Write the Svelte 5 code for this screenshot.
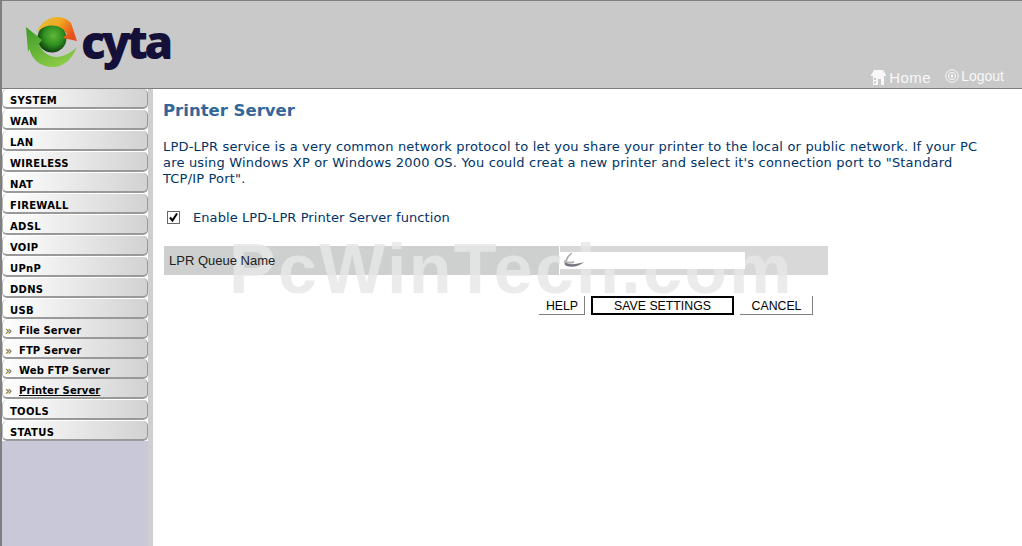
<script>
  const menu = [
    { label: "SYSTEM" },
    { label: "WAN" },
    { label: "LAN" },
    { label: "WIRELESS" },
    { label: "NAT" },
    { label: "FIREWALL" },
    { label: "ADSL" },
    { label: "VOIP" },
    { label: "UPnP" },
    { label: "DDNS" },
    { label: "USB", tight: true },
    { label: "File Server", sub: true, tight: true },
    { label: "FTP Server", sub: true, tight: true },
    { label: "Web FTP Server", sub: true, tight: true },
    { label: "Printer Server", sub: true, active: true },
    { label: "TOOLS" },
    { label: "STATUS" },
  ];
</script>

<div class="page">
  <header class="top">
    <div class="logo">
      <svg width="56" height="56" viewBox="0 0 56 56">
        <defs>
          <radialGradient id="ball" cx="0.55" cy="0.42" r="0.6">
            <stop offset="0" stop-color="#62b838" />
            <stop offset="0.55" stop-color="#2f8f20" />
            <stop offset="1" stop-color="#0c3a0e" />
          </radialGradient>
          <linearGradient id="ring" x1="0" y1="0" x2="1" y2="0.5">
            <stop offset="0" stop-color="#d8c840" />
            <stop offset="0.55" stop-color="#f5a623" />
            <stop offset="1" stop-color="#e8501a" />
          </linearGradient>
          <linearGradient id="arrow" x1="0" y1="0" x2="0.6" y2="1">
            <stop offset="0" stop-color="#3a9a28" />
            <stop offset="1" stop-color="#8ccb46" />
          </linearGradient>
        </defs>
        <circle cx="27" cy="22" r="14.5" fill="url(#ball)" />
        <path d="M11.5 17 C15 6 25 0 34 1 C38 1.5 42 3 45 6 L46 7 L52 25 L38 22 L42 18 C37 9 22 5 11.5 17 Z" fill="url(#ring)" />
        <path d="M1 11 L17 24 L14 28 C17 36 24 41 31 41 C38 41 46 37 52 31 C47 44 38 51 28 51 C16 51 7 44 4.5 33 L3 36 Z" fill="url(#arrow)" />
      </svg>
      <span class="brand">cyta</span>
    </div>
    <nav class="links">
      <span class="home">
        <svg width="17" height="17" viewBox="0 0 17 17">
          <path d="M1 6 L4 1 H13 L16 6 V7 H14 V16 H11 V10 H8 V16 H3 V7 H1 Z" fill="#f8f8f8" />
          <rect x="4" y="9" width="2" height="2" fill="#c9c9c9" />
          <rect x="4" y="12.5" width="2" height="2" fill="#c9c9c9" />
        </svg>
        Home
      </span>
      <span class="logout">
        <svg width="14" height="14" viewBox="0 0 14 14" fill="none" stroke="#f8f8f8">
          <circle cx="7" cy="7" r="6.2" />
          <circle cx="7" cy="7" r="3.6" />
          <circle cx="7" cy="7" r="1.4" fill="#f8f8f8" stroke="none" />
        </svg>
        Logout
      </span>
    </nav>
  </header>

  <div class="body">
    <aside class="side">
      <ul class="menu">
        {#each menu as item}
          <li class="item" class:sub={item.sub} class:tight={item.tight}>
            {#if item.sub}<span class="mark">»</span>{/if}
            <span class:active={item.active}>{item.label}</span>
          </li>
        {/each}
      </ul>
    </aside>

    <main class="content">
      <h1>Printer Server</h1>
      <p class="intro">
        LPD-LPR service is a very common network protocol to let you share your printer to the local or public network. If your PC are using Windows XP or Windows 2000 OS. You could creat a new printer and select it's connection port to "Standard TCP/IP Port".
      </p>
      <div class="enable">
        <span class="box">
          <svg width="11" height="11" viewBox="0 0 11 11" fill="none">
            <path d="M2 5.5 L4.5 8.5 L9 1.5" stroke="#000" stroke-width="2" />
          </svg>
        </span>
        <span>Enable LPD-LPR Printer Server function</span>
      </div>
      <div class="row">
        <div class="name"><span>LPR Queue Name</span></div>
        <div class="value">
          <div class="field">
            <svg width="26" height="18" viewBox="0 0 26 18" fill="none">
              <path d="M5 9 C6 5 8 3 11 1" stroke="#a8a8a8" stroke-width="1.5" />
              <path d="M3 9 C6 13 14 13 23 10 C18 15 8 16 4 13 Z" fill="#74747e" />
              <path d="M4 8 C5 11 9 11 13 10" stroke="#b4b4b4" stroke-width="2" />
            </svg>
          </div>
        </div>
      </div>
      <div class="actions">
        <button class="btn">HELP</button>
        <button class="btn save">SAVE SETTINGS</button>
        <button class="btn cancel">CANCEL</button>
      </div>
    </main>
  </div>

  <div class="mark-text">PcWinTech.com</div>
</div>

<style>
  :global(body) {
    margin: 0;
    background: #fff;
  }

  .page {
    position: relative;
    width: 1022px;
    height: 546px;
    overflow: hidden;
    display: flex;
    flex-direction: column;
    font-family: "DejaVu Sans", Verdana, sans-serif;
    background: #fff;
  }

  .top {
    height: 87px;
    flex: none;
    display: flex;
    justify-content: space-between;
    align-items: flex-end;
    background: #c9c9c9;
    border-top: 1px solid #7f7f7f;
    border-left: 2px solid #7f7f7f;
    border-bottom: 1px solid #7f7f7f;
  }

  .logo {
    display: flex;
    align-items: flex-start;
    padding: 15px 0 0 23px;
    align-self: flex-start;
  }

  .brand {
    margin: -5px 0 0 0;
    font-family: "Open Sans", sans-serif;
    font-weight: 800;
    font-size: 46px;
    line-height: 60px;
    letter-spacing: -3.5px;
    color: #15103a;
  }

  .links {
    display: flex;
    align-items: flex-end;
    gap: 14px;
    padding: 0 18px 2px 0;
    font-family: "Liberation Sans", Arial, sans-serif;
    color: #f8f8f8;
  }

  .home,
  .logout {
    display: flex;
    align-items: center;
  }

  .home {
    gap: 2px;
    font-size: 15px;
    letter-spacing: 0.5px;
  }

  .logout {
    gap: 2px;
    font-size: 14px;
    margin-bottom: 2px;
  }

  .body {
    flex: 1;
    display: flex;
    min-height: 0;
  }

  .side {
    width: 153px;
    flex: none;
    box-sizing: border-box;
    border-left: 2px solid #7f7f7f;
    border-right: 5px solid #cfcfcf;
    background: #c8c8d8;
  }

  .menu {
    list-style: none;
    margin: 0;
    padding: 0;
    background: #fff;
  }

  .item {
    box-sizing: border-box;
    height: 20px;
    margin-bottom: 1px;
    padding: 5px 0 0 7px;
    display: flex;
    align-items: center;
    font-size: 10px;
    font-weight: 700;
    letter-spacing: 0.3px;
    color: #000;
    background: linear-gradient(90deg, #fff, #d2d2d2);
    border-style: solid;
    border-width: 0 1px 2px 1px;
    border-color: #b8b8b8 #999 #999 #b8b8b8;
    border-radius: 5px;
  }

  .item.tight {
    margin-bottom: 0;
  }

  .item.sub {
    padding-left: 2px;
    letter-spacing: 0.1px;
  }

  .mark {
    width: 14px;
    flex: none;
    font-weight: 400;
    font-size: 12px;
    color: #6a5a18;
  }

  .active {
    text-decoration: underline;
  }

  .content {
    flex: 1;
    min-width: 0;
    padding: 12px 29px 0 10px;
    color: #003366;
  }

  h1 {
    margin: 0;
    font-size: 16.5px;
    line-height: 20px;
    font-weight: 700;
    color: #336699;
  }

  .intro {
    margin: 18px 0 0;
    font-size: 13px;
    line-height: 16px;
    letter-spacing: 0.18px;
  }

  .enable {
    display: flex;
    align-items: center;
    gap: 13px;
    margin: 23px 0 0 4px;
    font-size: 13px;
    line-height: 16px;
    letter-spacing: 0.08px;
  }

  .box {
    box-sizing: border-box;
    width: 13px;
    height: 13px;
    flex: none;
    display: flex;
    margin-bottom: 2px;
    border: 1px solid #666;
    background: #fff;
  }

  .row {
    display: flex;
    width: 664px;
    height: 29px;
    margin: 20px 0 0 1px;
  }

  .name {
    width: 395px;
    box-sizing: border-box;
    padding: 0 0 1px 5px;
    display: flex;
    align-items: center;
    font-family: "Liberation Sans", Arial, sans-serif;
    font-size: 13px;
    color: #222;
    background: #cdd0cf;
  }

  .name span {
    position: relative;
    z-index: 1;
  }

  .value {
    flex: 1;
    box-sizing: border-box;
    padding: 6px 0;
    border-left: 1px solid #fff;
    background: #d8d8d8;
  }

  .field {
    position: relative;
    z-index: 1;
    width: 185px;
    height: 17px;
    background: #fff;
    line-height: 0;
  }

  .field svg {
    margin-left: 1px;
  }

  .actions {
    display: flex;
    gap: 6px;
    margin: 21px 0 0 376px;
  }

  .btn {
    box-sizing: border-box;
    height: 19px;
    width: 46px;
    padding: 1px 0 0 1px;
    font-family: "Liberation Sans", Arial, sans-serif;
    font-size: 12.3px;
    color: #000;
    background: #fff;
    border: none;
    border-right: 1px solid #808080;
    border-bottom: 1px solid #808080;
  }

  .save {
    width: 143px;
    padding: 0;
    border: 2px solid #000;
  }

  .cancel {
    width: 73px;
  }

  .mark-text {
    position: absolute;
    left: 229px;
    top: 231px;
    font-family: "Liberation Sans", Arial, sans-serif;
    font-weight: 700;
    font-size: 70px;
    line-height: 76px;
    letter-spacing: 2.3px;
    color: rgba(230, 230, 230, 0.82);
    pointer-events: none;
  }
</style>
